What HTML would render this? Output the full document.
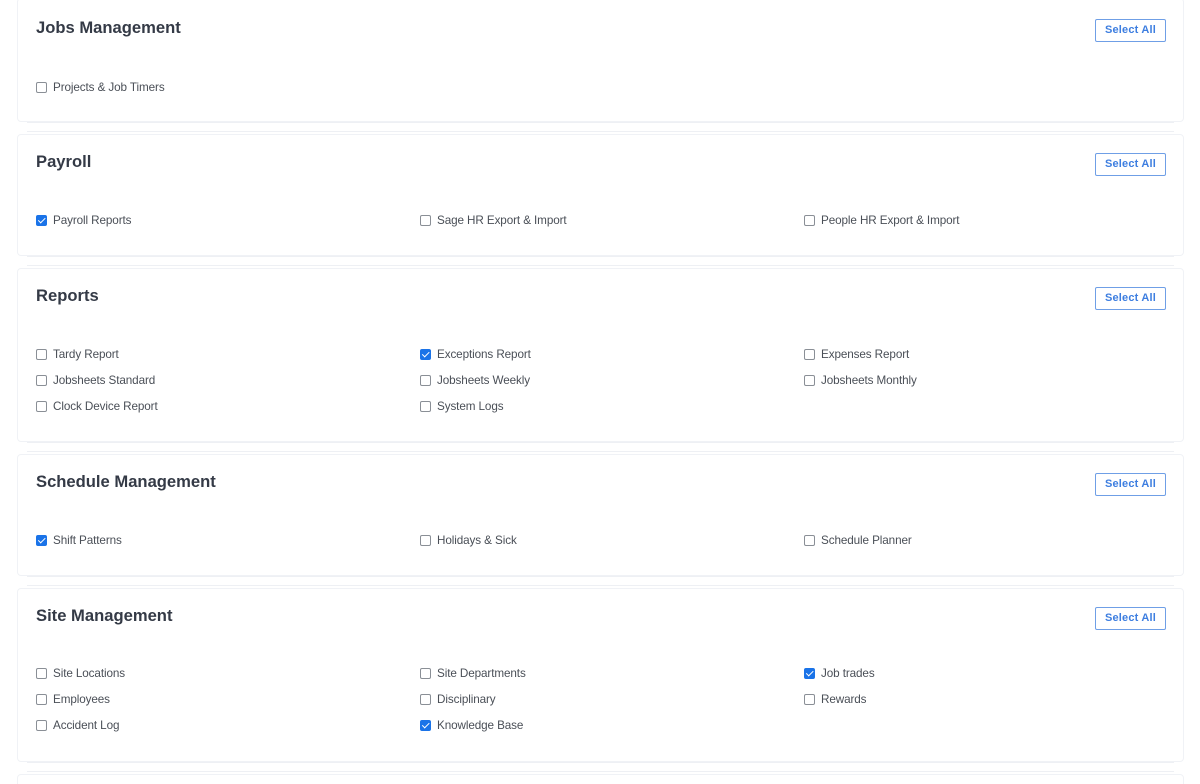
<!DOCTYPE html>
<html style="height:784px;overflow:hidden"><head><style>
body{margin:0;width:1200px;height:784px;background:#fff;font-family:"Liberation Sans",sans-serif;position:relative;overflow:hidden}
.card{position:absolute;left:17px;width:1167px;border:1px solid #f0f2f6;border-radius:4px;background:#fff;box-sizing:border-box}
.sep{position:absolute;left:27px;width:1147px;height:10px;border-top:1px solid #eef0f4;border-bottom:1px solid #eef0f4;box-sizing:border-box}
h2{position:absolute;left:18px;margin:0;font-size:16.6px;font-weight:600;color:#343a46}
.btn{position:absolute;left:1077px;width:71px;height:23px;border:1px solid #6f9fe6;border-radius:2px;box-sizing:border-box;color:#3d7ee0;font-size:11px;font-weight:bold;text-align:center;line-height:21px;letter-spacing:0.2px}
.cb{position:absolute;font-size:11.7px;color:#4a4f57;line-height:14px;white-space:nowrap;letter-spacing:-0.1px}
.cb i{position:absolute;left:-17px;top:1px;width:9px;height:9px;border:1px solid #8a8f96;border-radius:2px;background:#fff}
.cb i.on{background:#1a73e8;border-color:#1a73e8}
.cb i.on:after{content:"";position:absolute;left:3px;top:0px;width:2.5px;height:5.5px;border:solid #fff;border-width:0 1.6px 1.6px 0;transform:rotate(45deg)}
</style></head><body>
<div class="card" style="top:-2px;height:124px"></div>
<div class="sep" style="top:122px"></div>
<div class="card" style="top:134px;height:122px"></div>
<div class="sep" style="top:256px"></div>
<div class="card" style="top:268px;height:174px"></div>
<div class="sep" style="top:442px"></div>
<div class="card" style="top:454px;height:122px"></div>
<div class="sep" style="top:576px"></div>
<div class="card" style="top:588px;height:174px"></div>
<div class="sep" style="top:762px"></div>
<div class="card" style="top:774px;height:40px"></div>

<h2 style="left:36px;top:18px">Jobs Management</h2>
<div class="btn" style="left:1095px;top:19px">Select All</div>
<div class="cb" style="left:53px;top:81px"><i></i>Projects &amp; Job Timers</div>

<h2 style="left:36px;top:152px">Payroll</h2>
<div class="btn" style="left:1095px;top:153px">Select All</div>
<div class="cb" style="left:53px;top:214px"><i class="on"></i>Payroll Reports</div>
<div class="cb" style="left:437px;top:214px"><i></i>Sage HR Export &amp; Import</div>
<div class="cb" style="left:821px;top:214px"><i></i>People HR Export &amp; Import</div>

<h2 style="left:36px;top:286px">Reports</h2>
<div class="btn" style="left:1095px;top:287px">Select All</div>
<div class="cb" style="left:53px;top:348px"><i></i>Tardy Report</div>
<div class="cb" style="left:437px;top:348px"><i class="on"></i>Exceptions Report</div>
<div class="cb" style="left:821px;top:348px"><i></i>Expenses Report</div>
<div class="cb" style="left:53px;top:374px"><i></i>Jobsheets Standard</div>
<div class="cb" style="left:437px;top:374px"><i></i>Jobsheets Weekly</div>
<div class="cb" style="left:821px;top:374px"><i></i>Jobsheets Monthly</div>
<div class="cb" style="left:53px;top:400px"><i></i>Clock Device Report</div>
<div class="cb" style="left:437px;top:400px"><i></i>System Logs</div>

<h2 style="left:36px;top:472px">Schedule Management</h2>
<div class="btn" style="left:1095px;top:473px">Select All</div>
<div class="cb" style="left:53px;top:534px"><i class="on"></i>Shift Patterns</div>
<div class="cb" style="left:437px;top:534px"><i></i>Holidays &amp; Sick</div>
<div class="cb" style="left:821px;top:534px"><i></i>Schedule Planner</div>

<h2 style="left:36px;top:606px">Site Management</h2>
<div class="btn" style="left:1095px;top:607px">Select All</div>
<div class="cb" style="left:53px;top:667px"><i></i>Site Locations</div>
<div class="cb" style="left:437px;top:667px"><i></i>Site Departments</div>
<div class="cb" style="left:821px;top:667px"><i class="on"></i>Job trades</div>
<div class="cb" style="left:53px;top:693px"><i></i>Employees</div>
<div class="cb" style="left:437px;top:693px"><i></i>Disciplinary</div>
<div class="cb" style="left:821px;top:693px"><i></i>Rewards</div>
<div class="cb" style="left:53px;top:719px"><i></i>Accident Log</div>
<div class="cb" style="left:437px;top:719px"><i class="on"></i>Knowledge Base</div>
</body></html>
